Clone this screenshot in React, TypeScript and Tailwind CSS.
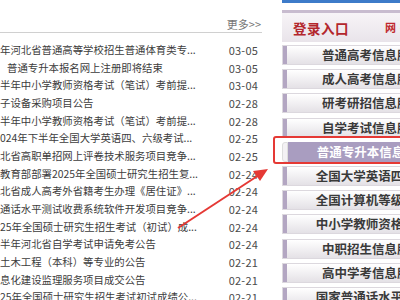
import React from "react";

const rows: { t: string; d: string; pl?: number }[] = [
  { t: "年河北省普通高等学校招生普通体育类专...", d: "03-05" },
  { t: "普通专升本报名网上注册即将结束", d: "03-05", pl: 7 },
  { t: "半年中小学教师资格考试（笔试）考前提...", d: "03-04" },
  { t: "子设备采购项目公告", d: "02-28" },
  { t: "半年中小学教师资格考试（笔试）考前提...", d: "02-28" },
  { t: "024年下半年全国大学英语四、六级考试...", d: "02-25" },
  { t: "北省高职单招网上评卷技术服务项目竞争...", d: "02-25" },
  { t: "教育部部署2025年全国硕士研究生招生复...", d: "02-24" },
  { t: "北省成人高考外省籍考生办理《居住证》...", d: "02-24" },
  { t: "通话水平测试收费系统软件开发项目竞争...", d: "02-24" },
  { t: "25年全国硕士研究生招生考试（初试）成...", d: "02-24" },
  { t: "半年河北省自学考试申请免考公告", d: "02-24" },
  { t: "土木工程（本科）等专业的公告", d: "02-21" },
  { t: "息化建设监理服务项目成交公告", d: "02-21" },
  { t: "25年全国硕士研究生招生考试初试成绩公...", d: "02-21" },
];

const buttons = [
  "普通高考信息服务",
  "成人高考信息服务",
  "研考研招信息服务",
  "自学考试信息服务",
  "普通专升本信息服务",
  "全国大学英语四六级",
  "全国计算机等级考试",
  "中小学教师资格考试",
  "中职招生信息服务",
  "高中学考信息服务",
  "国家普通话水平测试",
];

const font = { fontFamily: '"Noto Sans CJK SC", "Noto Sans", sans-serif' };

export default function App() {
  return (
    <div
      className="relative w-[400px] h-[300px] overflow-hidden bg-white flex items-start"
      style={font}
    >
      {/* left list */}
      <div className="w-[262px] shrink-0 flex flex-col">
        <div className="h-[33px] shrink-0 border-b border-[#d0d0d0] flex items-end justify-end pb-[1px] pr-[1px]">
          <span className="text-[11px] leading-[14px] text-[#777]">更多&gt;&gt;</span>
        </div>
        <div className="pt-[8px] flex flex-col shrink-0">
          {rows.map((r, i) => (
            <div key={i} className="h-[17.7px] shrink-0 flex items-center justify-between pr-[4px]">
              <span
                className="text-[10.4px] leading-[14px] text-[#3c3c3c] whitespace-nowrap"
                style={{ paddingLeft: r.pl ?? 0 }}
              >
                {r.t}
              </span>
              <span className="text-[11px] leading-[14px] text-[#4a4a4a] tracking-[0.2px]">{r.d}</span>
            </div>
          ))}
        </div>
      </div>

      {/* right panel */}
      <div className="pl-[20px] flex flex-col w-[200px] shrink-0">
        <div className="h-[3px] shrink-0 bg-[#3d7bc9] w-full" />
        <div className="mt-[7px] h-[32px] shrink-0 border-t-[3px] border-[#c8bccf] bg-gradient-to-b from-[#f7f4f7] to-[#e9e4ea] flex items-center pl-[11px]">
          <span className="text-[13.5px] leading-[16px] font-bold text-[#b3262c] tracking-[0.5px]">登录入口</span>
          <span className="ml-[36px] text-[11px] font-bold text-[#c0282e] tracking-[4px]">网报</span>
        </div>
        <div className="mt-[3px] flex flex-col gap-[4.2px] shrink-0">
          {buttons.map((b, i) => {
            const active = i === 4;
            return (
              <div
                key={i}
                className={
                  active
                    ? "h-[20px] w-[176px] shrink-0 flex bg-white"
                    : "h-[20px] w-[176px] shrink-0 flex border border-[#dcd8de] bg-gradient-to-b from-[#ffffff] to-[#e4e1e6]"
                }
              >
                {active ? (
                  <>
                    <div className="w-[6px] bg-[#f3f1f4] rounded-l-[3px] border border-[#ddd]" />
                    <div className="flex-1 bg-[#a99dc0] flex items-center justify-center">
                      <span className="text-[12.5px] leading-[16px] font-bold text-white">{b}</span>
                    </div>
                  </>
                ) : (
                  <>
                    <div className="w-[4px] bg-[#b3a6c2]" />
                    <div className="flex-1 flex items-center justify-center">
                      <span className="text-[12.5px] leading-[16px] font-bold text-[#3a3a3a]">{b}</span>
                    </div>
                  </>
                )}
              </div>
            );
          })}
        </div>
      </div>

      {/* red highlight box */}
      <div className="absolute left-[273px] top-[136px] w-[140px] h-[28px] border-2 border-[#e53935] rounded-[3px]" />

      {/* arrow */}
      <svg className="absolute left-0 top-0" width="400" height="300" viewBox="0 0 400 300">
        <line x1="178" y1="228" x2="259" y2="175" stroke="#e53935" strokeWidth="2" />
        <polygon points="268,169 253,171 260,181" fill="#e53935" />
      </svg>
    </div>
  );
}
